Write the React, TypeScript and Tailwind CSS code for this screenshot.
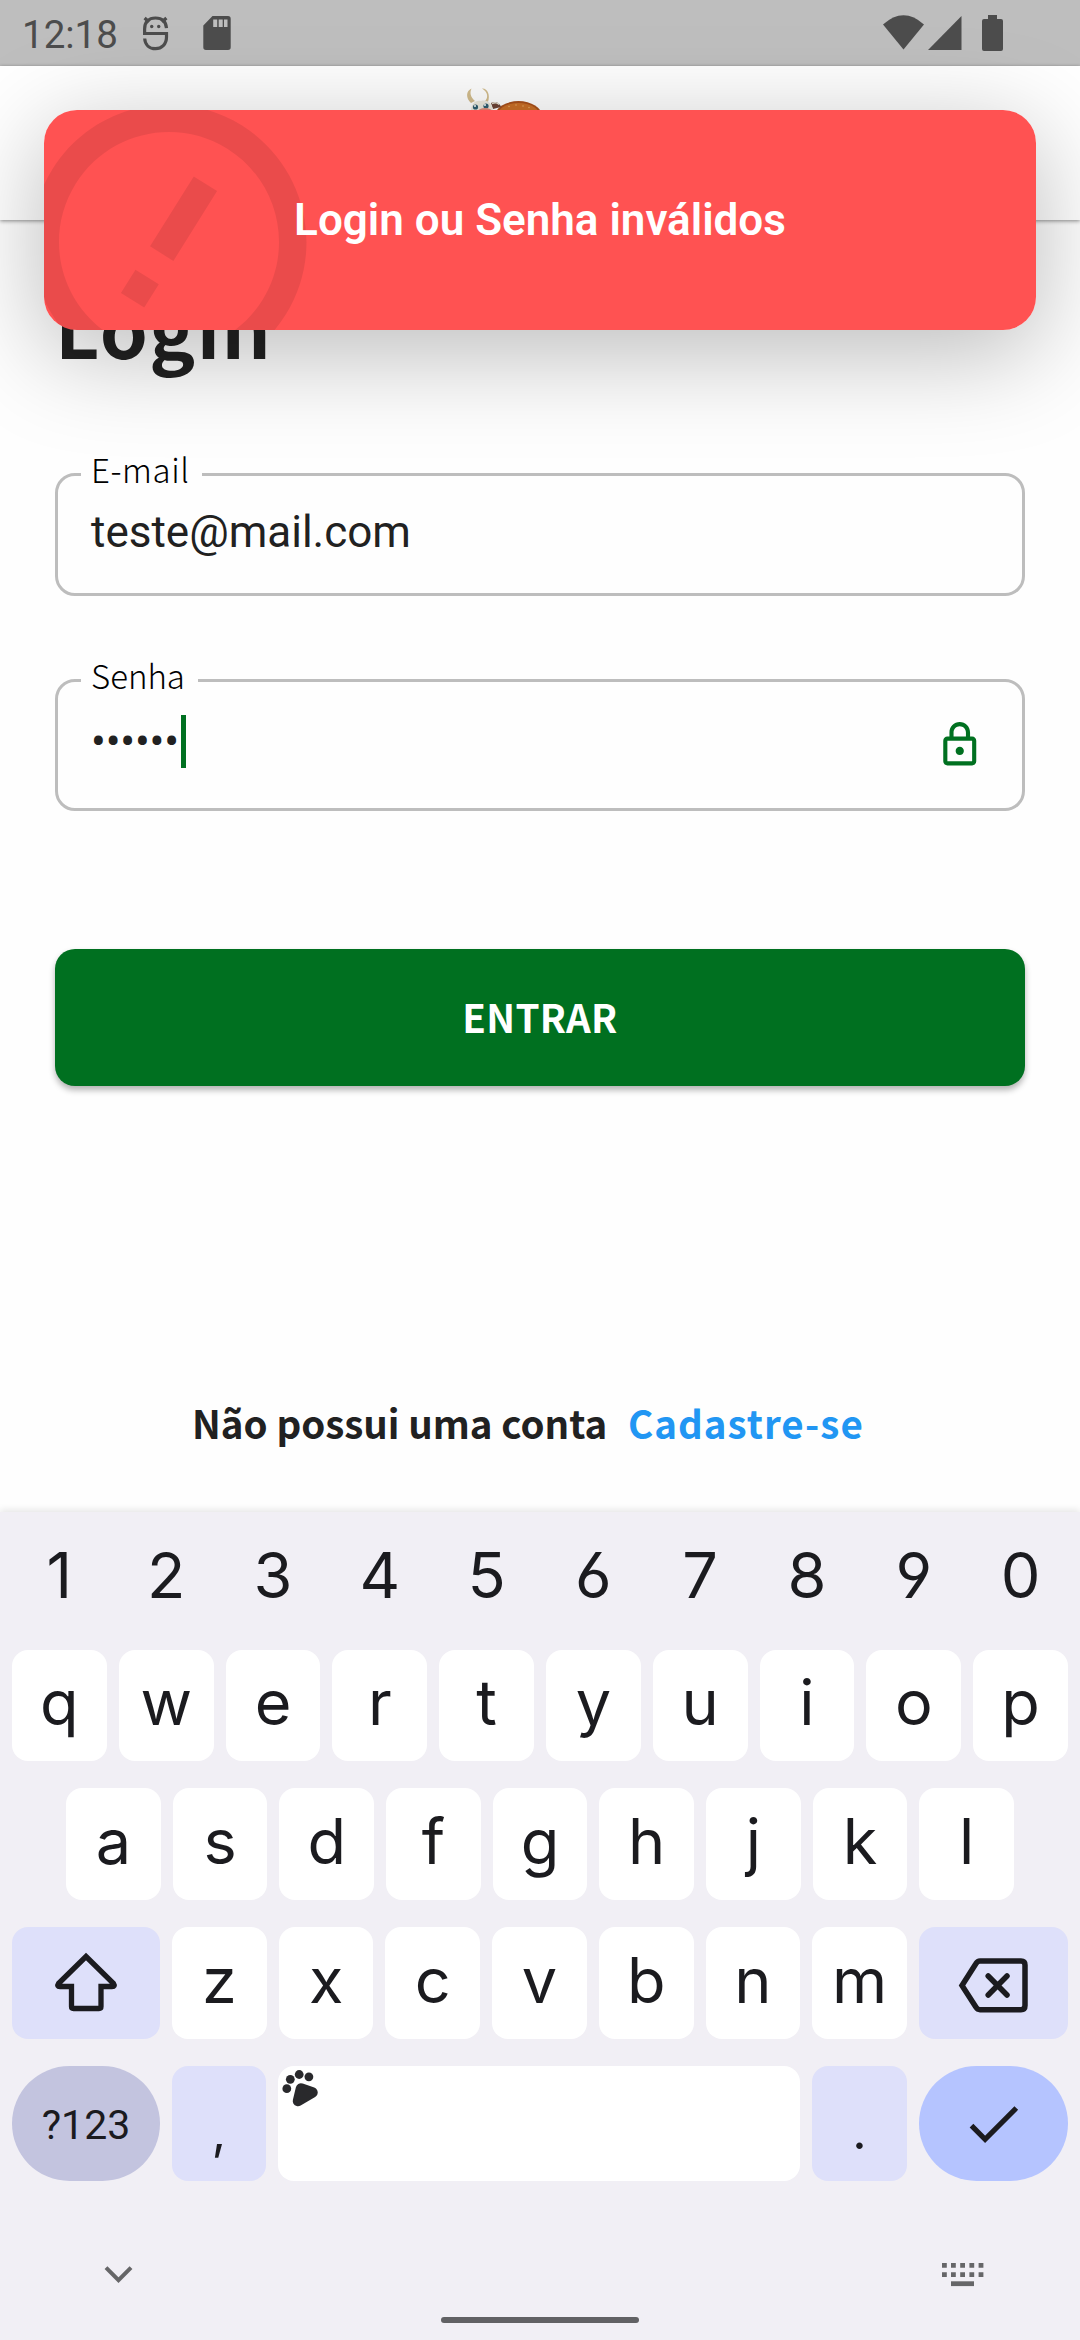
import type { ReactNode } from "react";

const mplus = "font-['Noto_Sans_CJK_JP','Noto_Sans',sans-serif]";

function StatusBar() {
  return (
    <header className="relative z-20 flex h-[66px] items-center bg-black/25 pl-[22px] text-[#4c4c4c]">
      <span className="mt-[4px] w-[118px] text-[38.5px] leading-[62px]">12:18</span>
      <svg className="h-[40px] w-[30px]" viewBox="0 0 30 40" fill="none" stroke="currentColor" strokeWidth="3.200">
        <path d="M26.500 15.200C26 8.500 22 5 15.500 5C8.500 5 4.600 9 4.600 16V20.500H26.500V24C26.500 31.500 21.500 35.700 15.500 35.700C9.500 35.700 5 32 4.700 25.500" />
        <path d="M4.600 5L9 9M26.400 5L22 9" />
        <circle cx="11.700" cy="13.500" r="1.700" fill="currentColor" stroke="none" />
        <circle cx="18.700" cy="13.500" r="1.700" fill="currentColor" stroke="none" />
      </svg>
      <svg className="ml-[32px] h-[36px] w-[29px]" viewBox="0 0 29 36">
        <path fill="currentColor" d="M10.500 1H26a2.700 2.700 0 0 1 2.700 2.700V32.300A2.700 2.700 0 0 1 26 35H4a2.700 2.700 0 0 1-2.700-2.700V10.500z" />
        <path fill="#bebebe" d="M11.200 4.500h4v7.500h-4zM16.700 4.500h4v7.500h-4zM22 4.500h3.500v7.500H22z" />
      </svg>
      <svg className="ml-auto h-[36px] w-[121px]" viewBox="883 15 121 36" fill="currentColor">
        <path d="M883 24.500Q903.500 6 924 24.500L903.500 49.500Z" />
        <path d="M928 50L961.500 16V50Z" />
        <path d="M988 15h9v4h4a2 2 0 0 1 2 2v28a2 2 0 0 1-2 2h-17a2 2 0 0 1-2-2V21a2 2 0 0 1 2-2h4z" />
      </svg>
      <span className="w-[76px]" />
    </header>
  );
}

function CowLogo() {
  return (
    <svg className="absolute top-[20px] left-[465px] h-[50px] w-[90px]" viewBox="465 86 90 50">
      <ellipse cx="518.500" cy="116" rx="23.500" ry="15" fill="#a9501a" />
      <ellipse cx="518.500" cy="117" rx="22" ry="14" fill="#cb7027" />
      <g fill="#e9b26a">
        <circle cx="509" cy="106.500" r=".7" />
        <circle cx="516" cy="105" r=".7" />
        <circle cx="523" cy="106" r=".7" />
        <circle cx="529" cy="107.500" r=".7" />
      </g>
      <path d="M491 103C495 100.500 500 103 501 107L493 109Z" fill="#6e4436" />
      <path d="M492 103.500C495 102 498 103 499 104.500" stroke="#e9e6d8" strokeWidth="1.500" fill="none" />
      <path d="M471 103C465.500 98 466 91 471.500 88.500C469.500 93 470.500 97 475 101Z" fill="#d3bd8d" />
      <path d="M484 102C489 98 488 92 482 88.500C487.500 88 490.500 95 488 102Z" fill="#d3bd8d" />
      <path d="M471 112C471 103 476 99.500 481 101C487 99 493 103 493 113Z" fill="#eceadd" />
      <circle cx="475.500" cy="107" r="2.600" fill="#2f5f70" />
      <circle cx="486" cy="106" r="2.600" fill="#2f5f70" />
      <circle cx="475" cy="106" r="1" fill="#fff" />
      <circle cx="485" cy="105" r="1" fill="#fff" />
      <ellipse cx="485" cy="111" rx="7" ry="3" fill="#e08a76" />
    </svg>
  );
}

function Toast() {
  return (
    <div className="absolute top-[110px] left-[44px] z-10 h-[220px] w-[992px] rounded-[33px] shadow-[0_22px_98px_3px_rgba(0,0,0,0.26)]">
      <div className="relative flex h-full items-center justify-center overflow-hidden rounded-[33px] bg-[#ff5252]">
        <svg className="absolute top-[-33px] left-[-40px] h-[330px] w-[330px] rotate-[32deg]" viewBox="0 0 24 24" fill="#000" fillOpacity=".082">
          <path d="M11 15h2v2h-2zm0-8h2v6h-2zm.99-5C6.470 2 2 6.480 2 12s4.470 10 9.990 10C17.520 22 22 17.520 22 12S17.520 2 11.990 2zM12 20c-4.420 0-8-3.580-8-8s3.580-8 8-8 8 3.580 8 8-3.580 8-8 8z" />
        </svg>
        <p className="relative text-[44px] leading-[60px] font-semibold text-white">Login ou Senha inválidos</p>
      </div>
    </div>
  );
}

function Field({ label, className, labelClass, children }: { label: string; className: string; labelClass: string; children: ReactNode }) {
  return (
    <div className={`relative flex rounded-[20px] border-[3px] border-[#bdbdbd] pl-[33px] ${className}`}>
      <span className={`absolute top-[-31px] left-[23px] h-[48px] bg-[#fefefe] pl-[10px] text-[33px] leading-[48px] font-light text-black ${mplus} ${labelClass}`}>
        {label}
      </span>
      {children}
    </div>
  );
}

const keyBase = "flex items-center justify-center rounded-[16px]";

function Letter({ ch }: { ch: string }) {
  return (
    <div className={`${keyBase} min-w-0 flex-1 bg-white pb-[7px] font-['Inter',sans-serif] text-[63px] leading-[80px]`}>{ch}</div>
  );
}

function Letters({ chars }: { chars: string }) {
  return (
    <>
      {chars.split("").map((c) => (
        <Letter key={c} ch={c} />
      ))}
    </>
  );
}

function Keyboard() {
  return (
    <section className="h-[828px] bg-[#f1eff5] px-[12px] pt-[14px] text-[#1b1b1f] shadow-[0_-2px_7px_rgba(0,0,0,0.1)]">
      <div className="grid h-[98px] grid-cols-10 gap-[12px] text-center font-['Inter',sans-serif] text-[63px] leading-[98px] [font-feature-settings:'cv03','cv04']">
        {"1234567890".split("").map((d) => (
          <span key={d}>{d}</span>
        ))}
      </div>
      <div className="mt-[26px] flex h-[111px] gap-[12px]">
        <Letters chars="qwertyuiop" />
      </div>
      <div className="mt-[27px] flex h-[112px] gap-[12px] px-[54px]">
        <Letters chars="asdfghjkl" />
      </div>
      <div className="mt-[27px] flex h-[112px] gap-[12px]">
        <div className={`${keyBase} w-[148px] bg-[#dee0fa]`}>
          <svg className="h-[66px] w-[70px]" viewBox="50.500 1950 70 66" fill="none" stroke="currentColor" strokeWidth="5.300">
            <path d="M85.500 1956.500L113 1983.500Q115 1986.500 111.500 1986.500H100.500V2006.500Q100.500 2008.500 98.500 2008.500H73Q71 2008.500 71 2006.500V1986.500H59.500Q56 1986.500 58 1983.500Z" />
          </svg>
        </div>
        <Letters chars="zxcvbnm" />
        <div className={`${keyBase} w-[149px] bg-[#dee0fa]`}>
          <svg className="h-[66px] w-[80px]" viewBox="953.500 1950 80 66" fill="none" stroke="currentColor" strokeWidth="5.500">
            <path d="M961.500 1985.500L975.500 1963.500Q977 1961 979.500 1961H1020.500Q1024.500 1961 1024.500 1965V2005.500Q1024.500 2009.700 1020.500 2009.700H979.500Q977 2009.700 975.500 2007.200Z" />
            <path d="M987.700 1976L1006.500 1995M1006.500 1976L987.700 1995" strokeLinecap="round" />
          </svg>
        </div>
      </div>
      <div className="mt-[27px] flex h-[115px] gap-[12px]">
        <div className="flex w-[148px] items-center justify-center rounded-full bg-[#c3c4df] pt-[3px] text-[41px] leading-[56px]">?123</div>
        <div className={`${keyBase} w-[94px] bg-[#dee0fa] pt-[15px] font-['Inter',sans-serif] text-[50px] leading-[60px]`}>,</div>
        <div className="flex-1 rounded-[16px] bg-white">
          <svg className="mt-[3px] ml-[3px] h-[40px] w-[40px]" viewBox="281 2069 40 40" fill="#29292c">
            <circle cx="286.800" cy="2088.700" r="4.400" />
            <circle cx="290.300" cy="2079.300" r="4.400" />
            <circle cx="299.200" cy="2074.500" r="4.400" />
            <circle cx="308.900" cy="2076.800" r="4.400" />
            <path d="M301 2088.500L312.500 2092.500L298 2101Z" stroke="#29292c" strokeWidth="10.500" strokeLinejoin="round" />
          </svg>
        </div>
        <div className={`${keyBase} w-[95px] bg-[#dee0fa] pt-[15px] font-['Inter',sans-serif] text-[50px] leading-[60px]`}>.</div>
        <div className="flex w-[149px] items-center justify-center rounded-full bg-[#b5c4ff]">
          <svg className="h-[46px] w-[60px]" viewBox="963.500 2100.500 60 46" fill="none" stroke="currentColor" strokeWidth="5.200">
            <path d="M971 2125.200L984.600 2138.800L1015.800 2107.500" />
          </svg>
        </div>
      </div>
      <div className="mt-[78px] flex h-[34px] items-start justify-between pr-[83px] pl-[90px] text-[#666668]">
        <svg className="h-[30px] w-[33px]" viewBox="102 2259 33 30" fill="none" stroke="currentColor" strokeWidth="4">
          <path d="M106 2267.700L118.500 2280.200L131 2267.700" />
        </svg>
        <svg className="mt-[4px] h-[24px] w-[43px]" viewBox="942 2263 43 24" fill="currentColor">
          {[942, 951, 960.2, 969.4, 978.6].map((x) => (
            <path key={x} d={`M${x} 2263h4.800v4.800h-4.800zM${x} 2272.300h4.800v4.800h-4.800z`} />
          ))}
          <path d="M951 2281.300h23v4.800h-23z" />
        </svg>
      </div>
      <div className="mx-auto mt-[24px] h-[6px] w-[198px] rounded-full bg-[#616164]" />
    </section>
  );
}

export default function App() {
  return (
    <div className="relative flex h-[2340px] w-[1080px] flex-col overflow-hidden bg-[#fefefe] font-['Roboto',sans-serif] text-[#212121]">
      <StatusBar />
      <div className="relative h-[154px] shrink-0 bg-white shadow-[0_1px_4px_rgba(0,0,0,0.45)]">
        <CowLogo />
      </div>
      <Toast />
      <main className="flex flex-1 flex-col px-[55px]">
        <h1 className={`mt-[53px] h-[106px] text-[77px] leading-[106px] font-bold tracking-[1.4px] ${mplus}`}>Login</h1>
        <Field label="E-mail" className="mt-[94px] h-[123px]" labelClass="w-[121px] tracking-[0.6px]">
          <span className="mt-[26px] text-[44px] leading-[60px]">teste@mail.com</span>
        </Field>
        <Field label="Senha" className="mt-[83px] h-[132px]" labelClass="w-[117px]">
          <span className="mt-[30px] w-[90px] text-[44px] leading-[60px] tracking-[-0.2px]">••••••</span>
          <span className="mt-[33px] h-[53px] w-[5px] bg-[#007020]" />
          <svg className="mt-[38px] mr-[38px] ml-auto h-[49.5px] w-[49.5px]" viewBox="0 0 24 24" fill="#007020">
            <path d="M18 8h-1V6c0-2.760-2.240-5-5-5S7 3.240 7 6v2H6c-1.100 0-2 .9-2 2v10c0 1.100.9 2 2 2h12c1.100 0 2-.9 2-2V10c0-1.100-.9-2-2-2zM9 6c0-1.660 1.340-3 3-3s3 1.340 3 3v2H9V6zm9 14H6V10h12v10zm-6-3c1.100 0 2-.9 2-2s-.9-2-2-2-2 .9-2 2 .9 2 2 2z" />
          </svg>
        </Field>
        <button className={`mt-[138px] h-[137px] rounded-[20px] bg-[#007020] pb-[3px] text-[38.5px] leading-[60px] font-bold tracking-[0.3px] text-white shadow-[0_4px_6px_rgba(0,0,0,0.3)] ${mplus}`}>
          ENTRAR
        </button>
        <p className={`mt-[306px] flex pl-[137px] text-[38.5px] leading-[60px] font-bold ${mplus}`}>
          <span className="w-[436px] whitespace-nowrap">Não possui uma conta</span>
          <a className="tracking-[1px] text-[#2196f3]">Cadastre-se</a>
        </p>
      </main>
      <Keyboard />
    </div>
  );
}
